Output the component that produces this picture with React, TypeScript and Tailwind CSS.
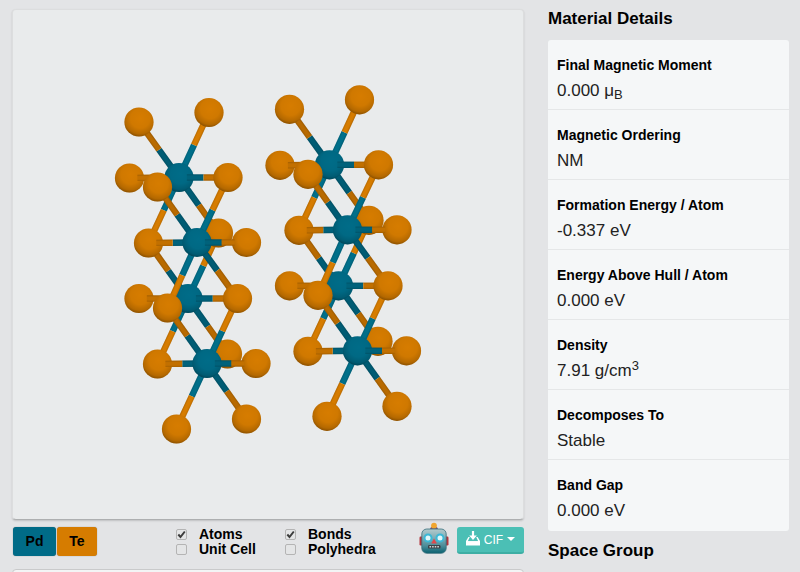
import React from "react";

type Atom = { x: number; y: number; el: "Pd" | "Te" };

const atoms: Record<string, Atom> = {
  A: { x: 139, y: 122, el: "Te" },
  B: { x: 209, y: 112.5, el: "Te" },
  C: { x: 129.5, y: 178, el: "Te" },
  D: { x: 157.5, y: 187, el: "Te" },
  E: { x: 228, y: 177.5, el: "Te" },
  F: { x: 148.5, y: 243, el: "Te" },
  G: { x: 218.5, y: 233, el: "Te" },
  H: { x: 246.5, y: 242.5, el: "Te" },
  I: { x: 139, y: 298.5, el: "Te" },
  J: { x: 167.5, y: 308, el: "Te" },
  K: { x: 237.5, y: 298.5, el: "Te" },
  L: { x: 157.5, y: 364, el: "Te" },
  M: { x: 227.5, y: 354, el: "Te" },
  N: { x: 256, y: 363.5, el: "Te" },
  O: { x: 176.5, y: 429, el: "Te" },
  P: { x: 246.5, y: 419, el: "Te" },
  P1: { x: 179, y: 177.5, el: "Pd" },
  P2: { x: 197, y: 242.5, el: "Pd" },
  P3: { x: 188, y: 298.5, el: "Pd" },
  P4: { x: 207, y: 363.5, el: "Pd" },
};

/* Back-to-front: one letter code is an atom, "X-Y-s-t" a bond drawn from fraction s to t. */
const scene: string[] = [
  "P1-G", "P3-M", "P3-G", "G", "M",
  "P1-A", "P1-B", "P1-F", "P3-F", "P3-L",
  "A", "B", "P1", "P3", "C", "I",
  "P1-C-0.3-0.84", "P3-I-0.3-0.84", "P1-E-0.16-1", "P3-K-0.16-1",
  "P2-E", "P2-K", "P4-K", "P2-J", "P2-D", "P4-J", "P4-O", "P4-P",
  "E", "K", "F", "L", "O", "P", "H", "N",
  "P2-F-0-0.84", "P4-L-0-0.84", "P2", "P4",
  "P2-H-0.16-0.76", "P4-N-0.16-0.76",
  "D", "J",
];

const fill = { Pd: "#006c88", Te: "#d67c00" };

function Bond({ code }: { code: string }) {
  const [p, q, s = "0", t = "1"] = code.split("-");
  const a = atoms[p];
  const b = atoms[q];
  const dx = b.x - a.x;
  const dy = b.y - a.y;
  const length = Math.hypot(dx, dy);
  const angle = (Math.atan2(dy, dx) * 180) / Math.PI;
  const start = Number(s) * length;
  const end = Number(t) * length;
  const mid = Math.max(start, length / 2);
  const falling = dx * dy > 0 && Math.abs(dy) > 20;
  const flat = Math.abs(dy) < 20;
  const pd = falling ? "#005c74" : flat ? "#00627b" : "#006f8a";
  const te = falling ? "#b86a00" : flat ? "#c27000" : "#d67c00";
  return (
    <g transform={`translate(${a.x} ${a.y}) rotate(${angle})`}>
      <rect x={start} y={-3.2} width={mid - start} height={6.4} fill={pd} />
      <rect x={mid} y={-3.2} width={end - mid} height={6.4} fill={te} />
      <rect x={start} y={-3.2} width={end - start} height={6.4} fill="url(#rod)" />
    </g>
  );
}

function Sphere({ atom }: { atom: Atom }) {
  return (
    <g>
      <circle cx={atom.x} cy={atom.y} r={14.6} fill={fill[atom.el]} />
      <circle cx={atom.x} cy={atom.y} r={14.6} fill="url(#shade)" />
    </g>
  );
}

function Column() {
  return (
    <>
      {scene.map((item) =>
        item.includes("-") ? <Bond key={item} code={item} /> : <Sphere key={item} atom={atoms[item]} />
      )}
    </>
  );
}

function Crystal() {
  return (
    <svg viewBox="13 10 510 509" className="block h-auto w-full" role="img" aria-label="PdTe2">
      <defs>
        <radialGradient id="shade" cx="0.54" cy="0.38" r="0.66">
          <stop offset="0" stopColor="#000" stopOpacity="0" />
          <stop offset="0.5" stopColor="#000" stopOpacity="0.03" />
          <stop offset="0.8" stopColor="#000" stopOpacity="0.16" />
          <stop offset="1" stopColor="#000" stopOpacity="0.42" />
        </radialGradient>
        <linearGradient id="rod" x1="0" y1="0" x2="0" y2="1">
          <stop offset="0" stopColor="#000" stopOpacity="0.14" />
          <stop offset="0.3" stopColor="#000" stopOpacity="0" />
          <stop offset="0.7" stopColor="#000" stopOpacity="0" />
          <stop offset="1" stopColor="#000" stopOpacity="0.16" />
        </linearGradient>
      </defs>
      <Column />
      <g transform="translate(150.5 -12.7)">
        <Column />
      </g>
    </svg>
  );
}

function Robot() {
  return (
    <svg viewBox="0 0 30 32" className="h-8 w-[30px]" aria-hidden="true">
      <defs>
        <linearGradient id="face" x1="0" y1="0" x2="0" y2="1">
          <stop offset="0" stopColor="#b3cacd" />
          <stop offset="0.35" stopColor="#82afb6" />
          <stop offset="0.7" stopColor="#4a8c98" />
          <stop offset="1" stopColor="#08606f" />
        </linearGradient>
      </defs>
      <rect x="0.500" y="14.500" width="4" height="9" rx="1.200" fill="#b3343c" />
      <rect x="25.500" y="14.500" width="4" height="9" rx="1.200" fill="#b3343c" />
      <path d="M11 7.500q0-3 4-3t4 3z" fill="#71537c" />
      <circle cx="15" cy="3.700" r="2.900" fill="#f0a52f" />
      <rect x="2.800" y="7" width="24.400" height="24.300" rx="5" fill="url(#face)" stroke="#376f7b" strokeWidth="0.800" />
      <circle cx="9" cy="16" r="3.500" fill="#e0f8fa" stroke="#3cb8d6" strokeWidth="2" />
      <circle cx="21" cy="16" r="3.500" fill="#e0f8fa" stroke="#3cb8d6" strokeWidth="2" />
      <path d="M15 16.500l2.800 5h-5.600z" fill="#e2474b" />
      <rect x="9" y="23" width="12.500" height="3.600" rx="1.200" fill="#3c4247" />
      <path d="M10.500 24.800h10" stroke="#cfd6d8" strokeWidth="1.600" strokeDasharray="1.600 1" />
    </svg>
  );
}

function Check({ label, on = false }: { label: string; on?: boolean }) {
  return (
    <label className="flex h-[15px] items-center gap-3 text-[14px] leading-[15px] font-bold">
      <span className="grid">
        <input
          type="checkbox"
          defaultChecked={on}
          className="peer col-start-1 row-start-1 size-[11px] appearance-none rounded-[2px] border border-[#b4b4b4] bg-[#e4e5e6]"
        />
        <svg
          viewBox="0 0 11 11"
          className="pointer-events-none invisible col-start-1 row-start-1 size-[11px] peer-checked:visible"
          aria-hidden="true"
        >
          <path d="M2.300 5.500l2.200 2.500L8.800 2.500" fill="none" stroke="#3c3c3c" strokeWidth="2" />
        </svg>
      </span>
      {label}
    </label>
  );
}

const details: [string, React.ReactNode][] = [
  ["Final Magnetic Moment", <>0.000 μ<sub className="text-[13px]">B</sub></>],
  ["Magnetic Ordering", "NM"],
  ["Formation Energy / Atom", "-0.337 eV"],
  ["Energy Above Hull / Atom", "0.000 eV"],
  ["Density", <>7.91 g/cm<sup className="text-[13px]">3</sup></>],
  ["Decomposes To", "Stable"],
  ["Band Gap", "0.000 eV"],
];

export default function App() {
  return (
    <div className="h-screen overflow-hidden bg-[#e3e4e6] font-['Liberation_Sans',Arial,sans-serif] text-black">
      <div className="flex gap-6 pr-[11px] pl-3">
        <main className="min-w-0 flex-1 pt-[9px]">
          <section className="rounded-[4px] border border-[#dcddde] border-b-[#adafb0] bg-[#e9ebec] shadow-[0_1px_2px_rgba(0,0,0,0.16)]">
            <Crystal />
          </section>
          <div className="mt-[7px] flex h-[29px] items-center">
            <div className="flex gap-px pl-px text-[14px] font-bold">
              <button className="h-[29px] w-[43px] rounded-[3px] bg-[#006b87] shadow-[0_0_1px_#777]">Pd</button>
              <button className="h-[29px] w-10 rounded-[3px] bg-[#d67c00] shadow-[0_0_1px_#777]">Te</button>
            </div>
            <div className="ml-[79px] w-[109px]">
              <Check label="Atoms" on />
              <Check label="Unit Cell" />
            </div>
            <div>
              <Check label="Bonds" on />
              <Check label="Polyhedra" />
            </div>
            <div className="ml-auto flex items-center gap-2">
              <button aria-label="Robot" className="-mt-2">
                <Robot />
              </button>
              <button className="mb-0.5 flex h-[27px] w-[67px] items-center justify-center gap-1 rounded-[3px] border-b-2 border-[#3daea4] bg-[#4bbfb5] text-[12px] text-white">
                <svg viewBox="0 0 14 15" className="mb-0.5 h-[15px] w-[14px]" aria-hidden="true">
                  <path d="M5.900 0h2.200v4.500h2.700L7 9 3.200 4.500h2.700z" fill="#fff" />
                  <path d="M2.400 6L0 10v4.500h14V10l-2.400-4h-1.400l2 4.200H1.800L3.800 6z" fill="#fff" />
                  <path d="M1 10.200h12v3.300H1z" fill="#fff" />
                </svg>
                CIF
                <svg viewBox="0 0 8 4" className="mb-0.5 h-1 w-2" aria-hidden="true">
                  <path d="M0 0h8L4 4z" fill="#fff" />
                </svg>
              </button>
            </div>
          </div>
          <div className="mt-[13px] h-10 rounded-[4px] border border-[#c9cacb] bg-[#f3f4f5]" />
        </main>
        <aside className="w-[241px] shrink-0">
          <h2 className="pt-[9px] pb-[11px] text-[17px] leading-5 font-bold">Material Details</h2>
          <dl className="overflow-hidden rounded-[3px] bg-[#f5f7f8] pb-px">
            {details.map(([name, value]) => (
              <div key={name} className="h-[70px] border-b border-[#e5e7e8] px-[9px] pt-[17px] last:border-b-0">
                <dt className="text-[14px] leading-4 font-bold">{name}</dt>
                <dd className="mt-2 text-[17px] leading-5 text-[#222]">{value}</dd>
              </div>
            ))}
          </dl>
          <h2 className="pt-[10px] text-[17px] leading-5 font-bold">Space Group</h2>
        </aside>
      </div>
    </div>
  );
}
